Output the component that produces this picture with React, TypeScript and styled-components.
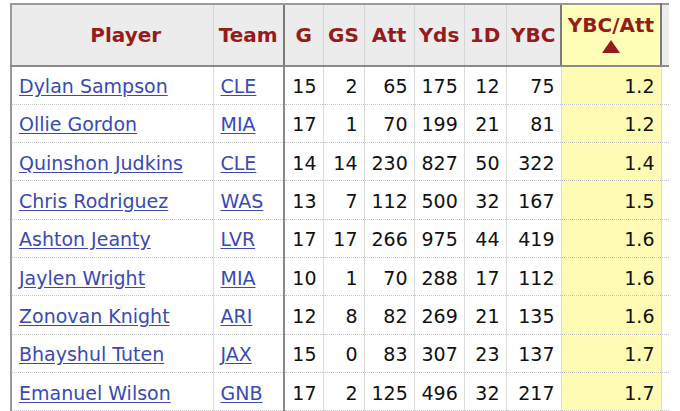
import React from "react";
import styled, { createGlobalStyle } from "styled-components";

const GlobalStyle = createGlobalStyle`
    html, body {
        margin: 0;
        padding: 0;
        background: #ffffff;
    }
    body {
        font-family: "DejaVu Sans", Verdana, sans-serif;
    }
`;

const Page = styled.div`
    padding: 3px 0 0 10px;
    width: 680px;
    height: 411px;
    box-sizing: border-box;
    overflow: hidden;
`;

const Table = styled.table`
    border-collapse: collapse;
    table-layout: fixed;
    width: 658px;
    font-size: 19px;
    color: #111;
`;

const HeadCell = styled.th<{ $sorted?: boolean; $strong?: boolean; $indent?: number }>`
    height: 60px;
    padding: 0 3px 0 ${(p) => (p.$indent ? `${p.$indent}px` : "3px")};
    background: ${(p) => (p.$sorted ? "#ffffb8" : "#ececec")};
    color: #961b1b;
    font-size: 20px;
    font-weight: bold;
    text-align: center;
    vertical-align: middle;
    line-height: ${(p) => (p.$sorted ? "20px" : "22px")};
    border-top: 2px solid #9a9a9a;
    border-bottom: 2px solid #8a8a8a;
    border-left: ${(p) => (p.$sorted || p.$strong ? "2px solid #7a7a7a" : "1px solid #d6d6d6")};
    border-right: ${(p) => (p.$sorted ? "2px solid #7a7a7a" : "1px solid #d6d6d6")};
    white-space: nowrap;
    overflow: hidden;

    &:first-child {
        border-left: 2px solid #9a9a9a;
    }
`;

const Arrow = styled.div`
    width: 0;
    height: 0;
    margin: 5px auto 3px;
    border-left: 9px solid transparent;
    border-right: 9px solid transparent;
    border-bottom: 13px solid #961b1b;
`;

const Row = styled.tr`
    height: 38.3px;
`;

const Cell = styled.td<{ $sorted?: boolean; $strong?: boolean; $num?: boolean }>`
    padding: 2px 6px 0 7px;
    text-align: ${(p) => (p.$num ? "right" : "left")};
    vertical-align: middle;
    background: ${(p) => (p.$sorted ? "#fffbb4" : "#ffffff")};
    border-bottom: 1px dotted #c4c4c4;
    border-left: ${(p) => (p.$strong ? "2px solid #8a8a8a" : "1px solid #dcdcdc")};
    border-right: 1px solid #dcdcdc;
    white-space: nowrap;
    overflow: hidden;

    &:first-child {
        border-left: 2px solid #9a9a9a;
    }
`;

const Edge = styled.td`
    border-bottom: 1px dotted #c4c4c4;
    border-left: 1px solid #dcdcdc;
    padding: 0;
`;

const HeadEdge = styled.th`
    background: #ececec;
    border-top: 2px solid #9a9a9a;
    border-bottom: 2px solid #8a8a8a;
    padding: 0;
`;

const Link = styled.a`
    color: #3a4ab0;
    text-decoration: underline;
    text-underline-offset: 2px;
`;

type Player = {
    name: string;
    team: string;
    g: number;
    gs: number;
    att: number;
    yds: number;
    fd: number;
    ybc: number;
    rate: string;
};

const players: Player[] = [
    { name: "Dylan Sampson", team: "CLE", g: 15, gs: 2, att: 65, yds: 175, fd: 12, ybc: 75, rate: "1.2" },
    { name: "Ollie Gordon", team: "MIA", g: 17, gs: 1, att: 70, yds: 199, fd: 21, ybc: 81, rate: "1.2" },
    { name: "Quinshon Judkins", team: "CLE", g: 14, gs: 14, att: 230, yds: 827, fd: 50, ybc: 322, rate: "1.4" },
    { name: "Chris Rodriguez", team: "WAS", g: 13, gs: 7, att: 112, yds: 500, fd: 32, ybc: 167, rate: "1.5" },
    { name: "Ashton Jeanty", team: "LVR", g: 17, gs: 17, att: 266, yds: 975, fd: 44, ybc: 419, rate: "1.6" },
    { name: "Jaylen Wright", team: "MIA", g: 10, gs: 1, att: 70, yds: 288, fd: 17, ybc: 112, rate: "1.6" },
    { name: "Zonovan Knight", team: "ARI", g: 12, gs: 8, att: 82, yds: 269, fd: 21, ybc: 135, rate: "1.6" },
    { name: "Bhayshul Tuten", team: "JAX", g: 15, gs: 0, att: 83, yds: 307, fd: 23, ybc: 137, rate: "1.7" },
    { name: "Emanuel Wilson", team: "GNB", g: 17, gs: 2, att: 125, yds: 496, fd: 32, ybc: 217, rate: "1.7" },
];

export default function App() {
    return (
        <>
            <GlobalStyle />
            <Page>
                <Table>
                    <colgroup>
                        <col style={{ width: 202 }} />
                        <col style={{ width: 71 }} />
                        <col style={{ width: 39 }} />
                        <col style={{ width: 41 }} />
                        <col style={{ width: 50 }} />
                        <col style={{ width: 50 }} />
                        <col style={{ width: 42 }} />
                        <col style={{ width: 55 }} />
                        <col style={{ width: 100 }} />
                        <col style={{ width: 8 }} />
                    </colgroup>
                    <thead>
                        <tr>
                            <HeadCell $indent={30}>Player</HeadCell>
                            <HeadCell>Team</HeadCell>
                            <HeadCell $strong>G</HeadCell>
                            <HeadCell>GS</HeadCell>
                            <HeadCell>Att</HeadCell>
                            <HeadCell>Yds</HeadCell>
                            <HeadCell>1D</HeadCell>
                            <HeadCell>YBC</HeadCell>
                            <HeadCell $sorted>
                                YBC/Att
                                <Arrow />
                            </HeadCell>
                            <HeadEdge />
                        </tr>
                    </thead>
                    <tbody>
                        {players.map((p) => (
                            <Row key={p.name}>
                                <Cell>
                                    <Link href="#">{p.name}</Link>
                                </Cell>
                                <Cell>
                                    <Link href="#">{p.team}</Link>
                                </Cell>
                                <Cell $num $strong>{p.g}</Cell>
                                <Cell $num>{p.gs}</Cell>
                                <Cell $num>{p.att}</Cell>
                                <Cell $num>{p.yds}</Cell>
                                <Cell $num>{p.fd}</Cell>
                                <Cell $num>{p.ybc}</Cell>
                                <Cell $num $sorted>{p.rate}</Cell>
                                <Edge />
                            </Row>
                        ))}
                    </tbody>
                </Table>
            </Page>
        </>
    );
}
